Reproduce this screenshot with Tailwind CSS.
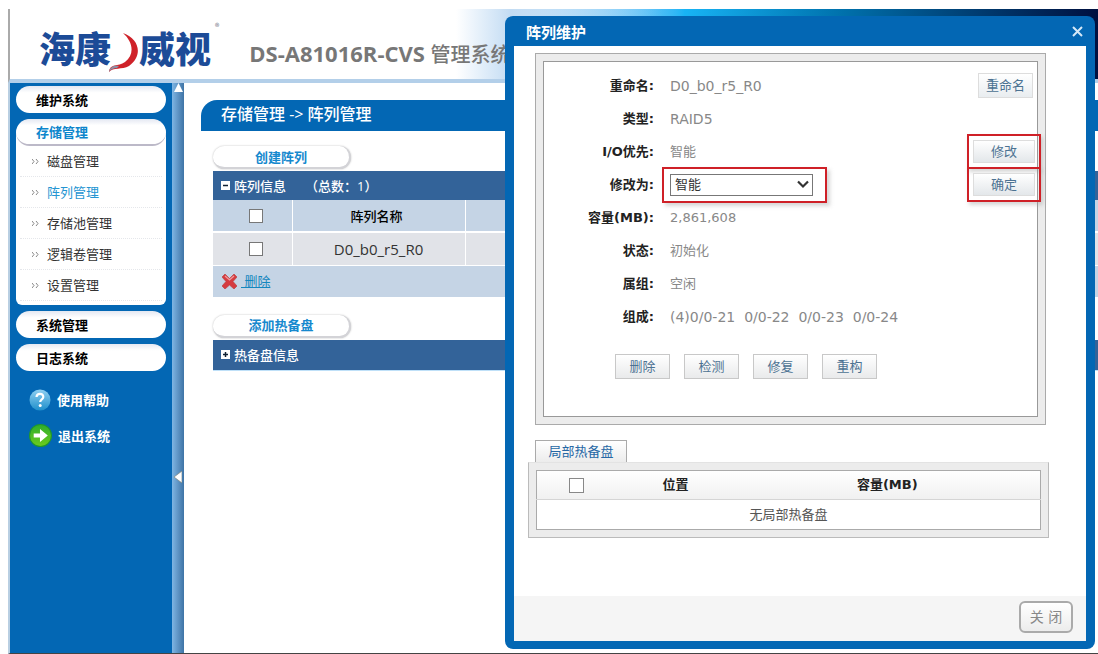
<!DOCTYPE html>
<html lang="zh-CN">
<head>
<meta charset="utf-8">
<meta name="viewport" content="width=device-width, initial-scale=1">
<title>DS-A81016R-CVS 管理系统</title>
<script src="https://cdn.jsdelivr.net/npm/@tailwindcss/browser@4"></script>
</head>
<body class="bg-white font-['Open_Sans','Noto_Sans_CJK_SC',sans-serif] text-[13px] leading-5 text-[#333]">
<div class="relative flex h-screen flex-col overflow-hidden pt-[9px] pl-2">
  <header class="flex h-[74px] shrink-0 items-start border-b-4 border-l-2 border-b-[#b3cfe9] border-l-[#aaa] bg-linear-to-r from-white from-42% via-[#18b4f5] via-62% to-[#001040]">
    <div class="flex h-full w-full items-start bg-linear-to-r from-white from-41% via-[#c3dcf3] via-46% to-transparent to-60%">
      <div class="flex items-center pt-[12px] pl-[29px] font-['Noto_Sans_CJK_SC',sans-serif] text-[36px] leading-9 font-black whitespace-nowrap text-[#1c4b97]" aria-label="海康威视">
        <span>海康</span>
        <svg class="-mx-[3px] mt-3 h-10 w-[34px] shrink-0" viewBox="0 0 34 40" aria-hidden="true"><path d="M15 0C32 6 35 23 21 33C14 37 5 34 1 39C2 30 10 34 17 29C27 21 25 9 15 0Z" fill="#cf2229"/><path d="M1 39C2 33 7 32 11 33L9 35C6 35 3 36 1 39Z" fill="#8b8fa5"/></svg>
        <span>威视</span><span class="self-start pl-1 text-[9px] leading-3 font-normal text-gray-500">®</span>
      </div>
      <h1 class="pt-[30px] pl-[30px] text-[22px] leading-7 font-bold whitespace-nowrap text-[#777]">DS-A81016R-CVS <span class="text-[20px] font-medium">管理系统</span></h1>
    </div>
  </header>

  <div class="flex min-h-0 flex-1 border-b border-l-2 border-b-[#444] border-l-[#b9cfe2]">
    <nav class="w-[162px] shrink-0 bg-[#0367b4] px-1.5 pt-[3px]">
      <button class="block h-[27px] w-full rounded-full bg-linear-to-b from-[#e4e8f2] to-white to-25% pl-5 text-left font-bold text-black">维护系统</button>
      <div class="mt-[6px] rounded-t-2xl rounded-b-md bg-white">
        <button class="block h-[27px] w-full rounded-full border-b-2 border-[#bcb9c8] bg-linear-to-b from-[#e4e8f2] to-white to-25% pl-5 text-left font-bold text-[#0e86cc]">存储管理</button>
        <ul class="px-1 pb-1">
          <li class="flex h-[31px] items-center gap-2 border-b border-dotted border-gray-200 pl-3"><svg class="h-[5px] w-[7px]" viewBox="0 0 7 5" fill="none" stroke="#888"><path d="M0 0L2 2.500L0 5M4 0L6 2.500L4 5"/></svg><a href="#">磁盘管理</a></li>
          <li class="flex h-[31px] items-center gap-2 border-b border-dotted border-gray-200 pl-3"><svg class="h-[5px] w-[7px]" viewBox="0 0 7 5" fill="none" stroke="#888"><path d="M0 0L2 2.500L0 5M4 0L6 2.500L4 5"/></svg><a href="#" class="text-[#2595d2]">阵列管理</a></li>
          <li class="flex h-[31px] items-center gap-2 border-b border-dotted border-gray-200 pl-3"><svg class="h-[5px] w-[7px]" viewBox="0 0 7 5" fill="none" stroke="#888"><path d="M0 0L2 2.500L0 5M4 0L6 2.500L4 5"/></svg><a href="#">存储池管理</a></li>
          <li class="flex h-[31px] items-center gap-2 border-b border-dotted border-gray-200 pl-3"><svg class="h-[5px] w-[7px]" viewBox="0 0 7 5" fill="none" stroke="#888"><path d="M0 0L2 2.500L0 5M4 0L6 2.500L4 5"/></svg><a href="#">逻辑卷管理</a></li>
          <li class="flex h-[31px] items-center gap-2 border-b border-dotted border-gray-200 pl-3"><svg class="h-[5px] w-[7px]" viewBox="0 0 7 5" fill="none" stroke="#888"><path d="M0 0L2 2.500L0 5M4 0L6 2.500L4 5"/></svg><a href="#">设置管理</a></li>
        </ul>
      </div>
      <button class="mt-[6px] block h-[27px] w-full rounded-full bg-linear-to-b from-[#e4e8f2] to-white to-25% pl-5 text-left font-bold text-black">系统管理</button>
      <button class="mt-[6px] block h-[27px] w-full rounded-full bg-linear-to-b from-[#e4e8f2] to-white to-25% pl-5 text-left font-bold text-black">日志系统</button>
      <a href="#" class="mt-[18px] flex items-center gap-1.5 pl-[13px] font-bold text-white">
        <svg class="size-[22px]" viewBox="0 0 22 22"><defs><linearGradient id="help" x2="0" y2="1"><stop stop-color="#8fd0f2"/><stop offset="1" stop-color="#1f8fcb"/></linearGradient></defs><circle cx="11" cy="11" r="10.500" fill="url(#help)"/><path d="M7.500 8C8 3.500 14.500 4 14.300 8C14.200 10.500 11.200 10.300 11.200 13" fill="none" stroke="#fff" stroke-width="2.200"/><circle cx="11.200" cy="16.500" r="1.500" fill="#fff"/></svg>使用帮助</a>
      <a href="#" class="mt-[13px] flex items-center gap-1.5 pl-[13px] font-bold text-white">
        <svg class="size-[23px]" viewBox="0 0 22 22"><defs><linearGradient id="exit" x2="0" y2="1"><stop stop-color="#2fae2c"/><stop offset="1" stop-color="#6ccb1e"/></linearGradient></defs><circle cx="11" cy="11" r="10.500" fill="url(#exit)" stroke="#1f962d"/><path d="M4.500 9H10.500V4.800L18 11L10.500 17.200V13H4.500Z" fill="#fff"/></svg>退出系统</a>
    </nav>
    <div class="flex w-3 shrink-0 flex-col items-center justify-between bg-linear-to-r from-[#7fb6e4] to-[#3f74a6]">
      <svg class="h-[9px] w-[9px]" viewBox="0 0 9 9"><path d="M4.500 0L9 9H0Z" fill="#fff"/></svg>
      <button aria-label="收起菜单" class="mt-[208px] text-white"><svg class="h-3 w-2" viewBox="0 0 8 12"><path d="M0 6L8 0V12Z" fill="#fff" stroke="#7f857c" stroke-width=".7"/></svg></button>
      <span></span>
    </div>

    <main class="min-w-0 flex-1 pt-[17px] pl-[17px]">
      <h2 class="h-[31px] rounded-tl-2xl bg-[#0367b4] pl-5 text-[16px] leading-[29px] font-medium text-white">存储管理 -&gt; 阵列管理</h2>
      <div class="pt-[15px] pl-3">
        <button class="block h-[23px] w-[138px] rounded-full border-r-2 border-b-2 border-[#d3d3d7] bg-white text-[13px] leading-5 font-bold text-[#1689ce] shadow-[0_0_2px_#bbb]">创建阵列</button>
        <div class="mt-[2px] flex h-[29px] items-center gap-1 bg-[#336399] pl-2 font-medium text-white">
          <svg class="size-[9px]" viewBox="0 0 9 9"><path fill="#fff" d="M0 0H9V9H0Z"/><path stroke="#123" stroke-width="1.500" d="M2 4.500H7"/></svg>
          <span>阵列信息</span><span class="pl-[15px]">（总数：1）</span>
        </div>
        <table class="w-full table-fixed border-collapse">
          <colgroup><col class="w-[79px]"><col class="w-[173px]"><col></colgroup>
          <thead><tr class="h-8 border-b-2 border-white bg-[#c5d4e5] text-[13px] text-black">
            <th class="border-r border-white pl-2"><input type="checkbox" aria-label="全选阵列" class="mx-auto block size-3.5 appearance-none border border-[#777] bg-white"></th>
            <th class="border-r border-white pr-1 font-medium">阵列名称</th><th></th></tr></thead>
          <tbody><tr class="h-[33px] border-b border-white bg-[#e1e3e8] text-center text-[15px]">
            <td class="border-r border-white pl-2"><input type="checkbox" aria-label="选择 D0_b0_r5_R0" class="mx-auto block size-3.5 appearance-none border border-[#777] bg-white"></td>
            <td class="border-r border-white">D0_b0_r5_R0</td><td></td></tr></tbody>
        </table>
        <div class="flex h-[31px] items-center gap-1 bg-[#c5d4e5] pl-[9px]">
          <svg class="size-[15px]" viewBox="0 0 15 15"><path d="M3 0L7.500 4.500L12 0L15 3L11 7.500L15 12L12 15L7.500 11L3 15L0 12L4 7.500L0 3Z" fill="#d53b40" stroke="#b44" stroke-width=".7"/><path d="M3 2L7.500 6L12 2" fill="none" stroke="#f09a9c" stroke-width="1.300"/></svg>
          <a href="#" class="text-[#1486be] underline">&nbsp;删除</a>
        </div>
        <button class="mt-[18px] block h-[23px] w-[138px] rounded-full border-r-2 border-b-2 border-[#d3d3d7] bg-white text-[13px] leading-5 font-bold text-[#1689ce] shadow-[0_0_2px_#bbb]">添加热备盘</button>
        <div class="mt-[2px] flex h-[31px] items-center gap-1 border-b border-[#bfe0f8] bg-[#336399] pl-2 font-medium text-white">
          <svg class="size-[9px]" viewBox="0 0 9 9"><path fill="#fff" d="M0 0H9V9H0Z"/><path stroke="#123" stroke-width="1.500" d="M2 4.500H7M4.500 2V7"/></svg>热备盘信息
        </div>
      </div>
    </main>
  </div>

  <section role="dialog" aria-labelledby="dlg" class="absolute top-4 right-[3px] bottom-[5px] flex w-[590px] flex-col rounded-lg bg-[#0367b4] px-[9px] pb-2 font-['DejaVu_Sans','Noto_Sans_CJK_SC',sans-serif]">
    <div class="flex h-[30px] shrink-0 items-center justify-between pr-[3px] pl-3 text-white">
      <h2 id="dlg" class="pt-1 text-[15px] font-bold">阵列维护</h2>
      <button aria-label="关闭窗口"><svg class="size-[11px]" viewBox="0 0 11 11" stroke="#d5e8f7" stroke-width="2"><path d="M1 1L10 10M10 1L1 10"/></svg></button>
    </div>
    <div class="flex-1 bg-white pt-[7px] pr-[37px] pl-[14px]">
      <div class="mr-[3px] ml-[7px] border border-[#aaa] bg-[#ececec] p-[7px]">
        <form class="h-[356px] border border-[#999] bg-white pt-[7px] pr-1">
          <div class="grid auto-rows-[33px] grid-cols-[110px_1fr_auto] items-center gap-x-4 text-[13px] text-[#888]">
            <span class="text-right font-bold text-[#222]">重命名:</span><span class="text-[14px]">D0_b0_r5_R0</span><button type="button" class="h-[25px] w-[55px] justify-self-end border border-[#ddd] bg-linear-to-b from-white to-[#e9edf0] text-[13px] text-[#4c7292]">重命名</button>
            <span class="text-right font-bold text-[#222]">类型:</span><span class="text-[14px]">RAID5</span><span></span>
            <span class="text-right font-bold text-[#222]">I/O优先:</span><span>智能</span>
            <span class="relative -mr-0.5 justify-self-end"><button type="button" class="block h-[23px] w-[62px] border border-[#ddd] bg-linear-to-b from-white to-[#e3e7ea] text-[13px] text-[#4c7292]">修改</button><i class="pointer-events-none absolute -inset-1.5 border-2 border-[#cf2027] shadow-[2px_3px_4px_#9996]"></i></span>
            <label for="mode" class="text-right font-bold text-[#222]">修改为:</label>
            <span class="relative h-[22px] w-[143px]">
              <select id="mode" class="block size-full appearance-none border border-[#777] bg-white pl-1 text-[13px] leading-5 text-[#333]"><option>智能</option></select>
              <svg class="pointer-events-none absolute top-[6px] right-1 h-[9px] w-3" viewBox="0 0 12 9" fill="none" stroke="#333" stroke-width="2.200"><path d="M1 1.500L6 6.500L11 1.500"/></svg>
              <i class="pointer-events-none absolute -top-[7px] -right-3.5 -bottom-[7px] -left-2 border-2 border-[#cf2027] shadow-[3px_3px_4px_#9996]"></i>
            </span>
            <span class="relative -mr-0.5 justify-self-end"><button type="button" class="block h-[23px] w-[62px] border border-[#ddd] bg-linear-to-b from-white to-[#e3e7ea] text-[13px] text-[#4c7292]">确定</button><i class="pointer-events-none absolute -inset-1.5 border-2 border-[#cf2027] shadow-[2px_3px_4px_#9996]"></i></span>
            <span class="text-right font-bold whitespace-nowrap text-[#222]">容量(MB):</span><span>2,861,608</span><span></span>
            <span class="text-right font-bold text-[#222]">状态:</span><span>初始化</span><span></span>
            <span class="text-right font-bold text-[#222]">属组:</span><span>空闲</span><span></span>
            <span class="text-right font-bold text-[#222]">组成:</span><span class="text-[14px] whitespace-pre">(4)0/0-21  0/0-22  0/0-23  0/0-24</span><span></span>
          </div>
          <div class="flex gap-[14px] pt-[21px] pl-[71px] text-[13px] text-[#4c7292]">
            <button type="button" class="h-[25px] w-[55px] border border-[#c8c8c8] bg-linear-to-b from-white to-[#e9eaeb]">删除</button>
            <button type="button" class="h-[25px] w-[55px] border border-[#c8c8c8] bg-linear-to-b from-white to-[#e9eaeb]">检测</button>
            <button type="button" class="h-[25px] w-[55px] border border-[#c8c8c8] bg-linear-to-b from-white to-[#e9eaeb]">修复</button>
            <button type="button" class="h-[25px] w-[55px] border border-[#c8c8c8] bg-linear-to-b from-white to-[#e9eaeb]">重构</button>
          </div>
        </form>
      </div>
      <button class="mt-[15px] ml-[7px] block h-[22px] w-[92px] border border-b-0 border-[#aaa] bg-linear-to-b from-white to-[#ececec] text-[13px] text-[#2668a5]">局部热备盘</button>
      <div class="border border-[#bbb] border-t-[#e3e3e3] bg-[#ececec] p-[7px]">
        <table class="w-full table-fixed border border-[#aaa] bg-white text-center text-[13px]">
          <colgroup><col class="w-[80px]"><col class="w-[150px]"><col></colgroup>
          <thead><tr class="h-[29px] border-b border-[#d5d5d5] bg-linear-to-b from-white to-[#f1f1f1] text-[#222]">
            <th><input type="checkbox" aria-label="全选热备盘" class="mx-auto block size-[15px] appearance-none border border-[#888] bg-white"></th>
            <th class="pr-8">位置</th><th class="pr-8">容量(MB)</th></tr></thead>
          <tbody><tr class="h-[30px] text-[#555]"><td colspan="3">无局部热备盘</td></tr></tbody>
        </table>
      </div>
    </div>
    <div class="flex h-[45px] shrink-0 items-start justify-end bg-[#f5f5f5] pt-[5px] pr-[13px]">
      <button class="h-8 w-[54px] rounded-md border-2 border-[#aaa] bg-linear-to-b from-white to-[#ececec] text-[14px] text-[#888]">关 闭</button>
    </div>
  </section>
</div>
</body>
</html>
